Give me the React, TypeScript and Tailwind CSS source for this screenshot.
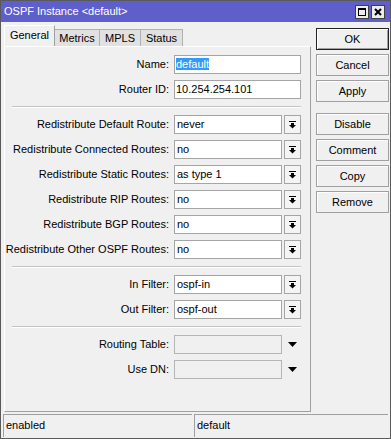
const Label = ({ text }: { text: string }) => (
  <div className="w-[164px] shrink-0 text-right text-[11px] leading-[19px] whitespace-nowrap">{text}</div>
);

const DropIcon = () => (
  <svg width="7" height="8" viewBox="0 0 7 8" className="block">
    <rect x="0" y="0" width="7" height="1" fill="#000" />
    <rect x="2" y="2" width="3" height="2" fill="#000" />
    <polygon points="0,4 7,4 3.5,7.5" fill="#000" />
  </svg>
);

const TextRow = ({ label, value, selected }: { label: string; value: string; selected?: boolean }) => (
  <div className="flex items-center h-[19px]">
    <Label text={label} />
    <div className="ml-[5px] w-[127px] h-[19px] border border-[#a5a5a5] bg-white px-[1px] text-[11px] leading-[17px] whitespace-nowrap">
      {selected ? <span className="bg-[#3399ff] text-white">{value}</span> : value}
    </div>
  </div>
);

const ComboRow = ({ label, value }: { label: string; value: string }) => (
  <div className="flex items-center h-[19px]">
    <Label text={label} />
    <div className="ml-[5px] w-[108px] h-[19px] border border-[#a5a5a5] bg-white px-[2px] text-[11px] leading-[17px] whitespace-nowrap">
      {value}
    </div>
    <div className="ml-[2px] w-[17px] h-[19px] border border-[#a5a5a5] bg-[#f4f4f4] flex items-center justify-center">
      <DropIcon />
    </div>
  </div>
);

const DisabledRow = ({ label }: { label: string }) => (
  <div className="flex items-center h-[19px]">
    <Label text={label} />
    <div className="ml-[5px] w-[108px] h-[19px] border border-[#b5b5b5] bg-[#f0f0f0]" />
    <div className="w-[21px] flex items-center justify-center">
      <svg width="9" height="5" viewBox="0 0 9 5" className="block">
        <polygon points="0,0 9,0 4.5,5" fill="#000" />
      </svg>
    </div>
  </div>
);

const Separator = () => (
  <div className="ml-[7px] w-[289px] my-[7px] border-t border-b border-t-[#c4c4c4] border-b-white" />
);

const Button = ({ text, def }: { text: string; def?: boolean }) => (
  <div
    className={
      "w-[73px] h-[22px] flex items-center justify-center text-[11px] bg-[#f0f0f0] " +
      (def
        ? "border border-[#222] shadow-[inset_1px_1px_0_#fff,inset_-1px_-1px_0_#a0a0a0]"
        : "border border-[#a0a0a0] shadow-[inset_1px_1px_0_#fff]")
    }
  >
    {text}
  </div>
);

export default function App() {
  return (
    <div className="w-[391px] h-[439px] border border-[#5a5a5a] bg-[#f0f0f0] flex flex-col text-black font-['Liberation_Sans',Arial,sans-serif]">
      {/* title bar */}
      <div className="h-[21px] bg-[#5f5fcc] flex items-center pl-[3px] pr-[5px]">
        <div className="text-white text-[11px] flex-1 whitespace-nowrap">OSPF Instance &lt;default&gt;</div>
        <div className="flex gap-[2px]">
          <div className="w-[14px] h-[14px] bg-[#ececec] border border-[#404040] flex items-center justify-center">
            <div className="w-[8px] h-[8px] border border-black border-t-2" />
          </div>
          <div className="w-[14px] h-[14px] bg-[#ececec] border border-[#404040] flex items-center justify-center">
            <svg width="8" height="8" viewBox="0 0 8 8" className="block">
              <path d="M1 1L7 7M7 1L1 7" stroke="#000" strokeWidth="2" />
            </svg>
          </div>
        </div>
      </div>

      {/* main */}
      <div className="flex h-[390px]">
        <div className="ml-[3px] w-[307px] flex flex-col">
          <div className="h-[24px] flex items-end text-[11px]">
            <div className="w-[51px] h-[21px] bg-[#f0f0f0] border-t border-l border-r border-t-white border-l-white border-r-[#a0a0a0] flex items-center justify-center pb-[2px]">
              General
            </div>
            <div className="w-[45px] h-[17px] bg-[#e1e1e1] border-t border-r border-[#b0b0b0] flex items-center justify-center">
              Metrics
            </div>
            <div className="w-[41px] h-[17px] bg-[#e1e1e1] border-t border-r border-[#b0b0b0] flex items-center justify-center">
              MPLS
            </div>
            <div className="w-[42px] h-[17px] bg-[#e1e1e1] border-t border-r border-[#b0b0b0] flex items-center justify-center">
              Status
            </div>
          </div>
          <div className="flex-1 border border-t-white border-l-white border-r-[#a0a0a0] border-b-[#a0a0a0] pt-[8px] flex flex-col">
            <div className="flex flex-col gap-[6px]">
              <TextRow label="Name:" value="default" selected />
              <TextRow label="Router ID:" value="10.254.254.101" />
            </div>
            <Separator />
            <div className="flex flex-col gap-[6px]">
              <ComboRow label="Redistribute Default Route:" value="never" />
              <ComboRow label="Redistribute Connected Routes:" value="no" />
              <ComboRow label="Redistribute Static Routes:" value="as type 1" />
              <ComboRow label="Redistribute RIP Routes:" value="no" />
              <ComboRow label="Redistribute BGP Routes:" value="no" />
              <ComboRow label="Redistribute Other OSPF Routes:" value="no" />
            </div>
            <Separator />
            <div className="flex flex-col gap-[6px]">
              <ComboRow label="In Filter:" value="ospf-in" />
              <ComboRow label="Out Filter:" value="ospf-out" />
            </div>
            <Separator />
            <div className="flex flex-col gap-[6px]">
              <DisabledRow label="Routing Table:" />
              <DisabledRow label="Use DN:" />
            </div>
          </div>
        </div>

        <div className="ml-[5px] pt-[6px] flex flex-col gap-[4px]">
          <Button text="OK" def />
          <Button text="Cancel" />
          <Button text="Apply" />
          <div className="h-[3px]" />
          <Button text="Disable" />
          <Button text="Comment" />
          <Button text="Copy" />
          <Button text="Remove" />
        </div>
      </div>

      {/* status bar */}
      <div className="flex-1 flex gap-[2px] pl-[2px] pr-[2px] pt-[2px] pb-[1px] text-[11px]">
        <div className="w-[189px] border-t border-l border-t-[#a0a0a0] border-l-[#a0a0a0] pl-[2px] leading-[20px]">enabled</div>
        <div className="flex-1 border-t border-l border-t-[#a0a0a0] border-l-[#a0a0a0] pl-[2px] leading-[20px]">default</div>
      </div>
    </div>
  );
}
